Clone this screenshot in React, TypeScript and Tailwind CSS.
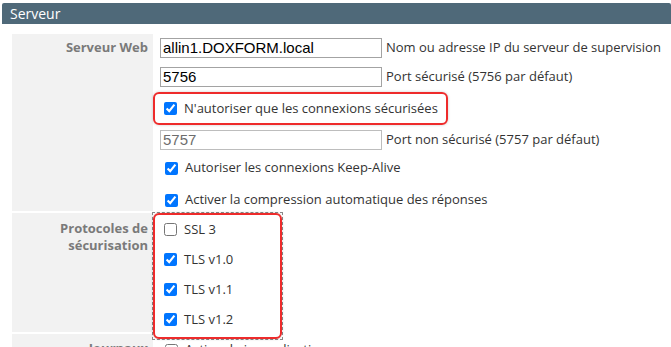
import React from 'react'

interface CheckProps {
  label: string
  checked?: boolean
  className?: string
}

function Check({ label, checked = false, className = '' }: CheckProps) {
  return (
    <label className={`flex items-center gap-[7px] whitespace-nowrap text-[13px] text-[#333] ${className}`}>
      <input type="checkbox" defaultChecked={checked} className="h-[13px] w-[13px] shrink-0 accent-[#0075ff]" />
      <span>{label}</span>
    </label>
  )
}

interface FieldProps {
  value: string
  hint: string
  disabled?: boolean
  className?: string
}

function Field({ value, hint, disabled = false, className = '' }: FieldProps) {
  return (
    <div className={`flex h-[20px] items-center ${className}`}>
      <input
        readOnly
        defaultValue={value}
        className={`h-[20px] w-[222px] border bg-white px-[2px] font-['Liberation_Sans',Arial,sans-serif] text-[15px] outline-none ${
          disabled ? 'border-[#bdbdbd] text-[#6d6d6d]' : 'border-[#a3a3a3] text-black'
        }`}
      />
      <span className="ml-[4px] whitespace-nowrap text-[13px] text-[#333]">{hint}</span>
    </div>
  )
}

const labelCell = 'bg-[#f2f2f2] pr-[5px] text-right text-[13px] font-bold leading-[17px] text-[#7a7a7a]'

export default function App() {
  return (
    <div className="h-[347px] w-[671px] overflow-hidden bg-white font-['Open_Sans',sans-serif]">
      {/* Section title */}
      <div className="ml-[2px] mt-[3px] h-[21px] rounded-t-[2px] bg-[#4f6979] pl-[8px] text-[14px] leading-[21px] text-white">
        Serveur
      </div>

      <div className="ml-[12px] mt-[10px] grid grid-cols-[141px_1fr]">
        {/* Serveur Web */}
        <div className={`${labelCell} pt-[5px]`}>Serveur Web</div>
        <div className="flex flex-col pb-[2px] pt-[4px]">
          <Field className="ml-[7px]" value="allin1.DOXFORM.local" hint="Nom ou adresse IP du serveur de supervision" />
          <Field className="ml-[7px] mt-[9px]" value="5756" hint="Port sécurisé (5756 par défaut)" />
          <div className="mt-[5px] flex h-[33px] w-[295px] items-center rounded-[6px] border-2 border-[#ee2b2b] pl-[9px] shadow-[0_0_3px_rgba(0,0,0,0.2)]">
            <Check checked label="N'autoriser que les connexions sécurisées" />
          </div>
          <Field className="ml-[7px] mt-[5px]" value="5757" hint="Port non sécurisé (5757 par défaut)" disabled />
          <Check className="ml-[12px] mt-[9px] h-[18px]" checked label="Autoriser les connexions Keep-Alive" />
          <Check className="ml-[12px] mt-[14px] h-[18px]" checked label="Activer la compression automatique des réponses" />
        </div>

        {/* Protocoles */}
        <div className={`${labelCell} col-span-2 grid grid-cols-subgrid border-t-2 border-white bg-transparent p-0`}>
          <div className="h-[119px] bg-[#f2f2f2] pr-[5px] pt-[7px]">
            Protocoles de
            <br />
            sécurisation
          </div>
          <div className="relative z-10 -mb-[8px] -ml-[1px] -mt-[1px] h-[128px] w-[131px] border border-dashed border-[#8a8a8a] font-normal">
            <div className="flex h-[126px] flex-col gap-[13px] rounded-[6px] border-2 border-[#ee2b2b] bg-white pl-[9px] pt-[6px] text-left shadow-[0_0_3px_rgba(0,0,0,0.2)]">
              <Check className="h-[17px]" label="SSL 3" />
              <Check className="h-[17px]" checked label="TLS v1.0" />
              <Check className="h-[17px]" checked label="TLS v1.1" />
              <Check className="h-[17px]" checked label="TLS v1.2" />
            </div>
          </div>
        </div>

        {/* Journaux (cut off by the window edge) */}
        <div className={`${labelCell} border-t-2 border-white pt-[6px]`}>Journaux</div>
        <div className="border-t-2 border-transparent pt-[7px]">
          <Check className="ml-[12px] h-[18px]" label="Activer la journalisation" />
        </div>
      </div>
    </div>
  )
}
